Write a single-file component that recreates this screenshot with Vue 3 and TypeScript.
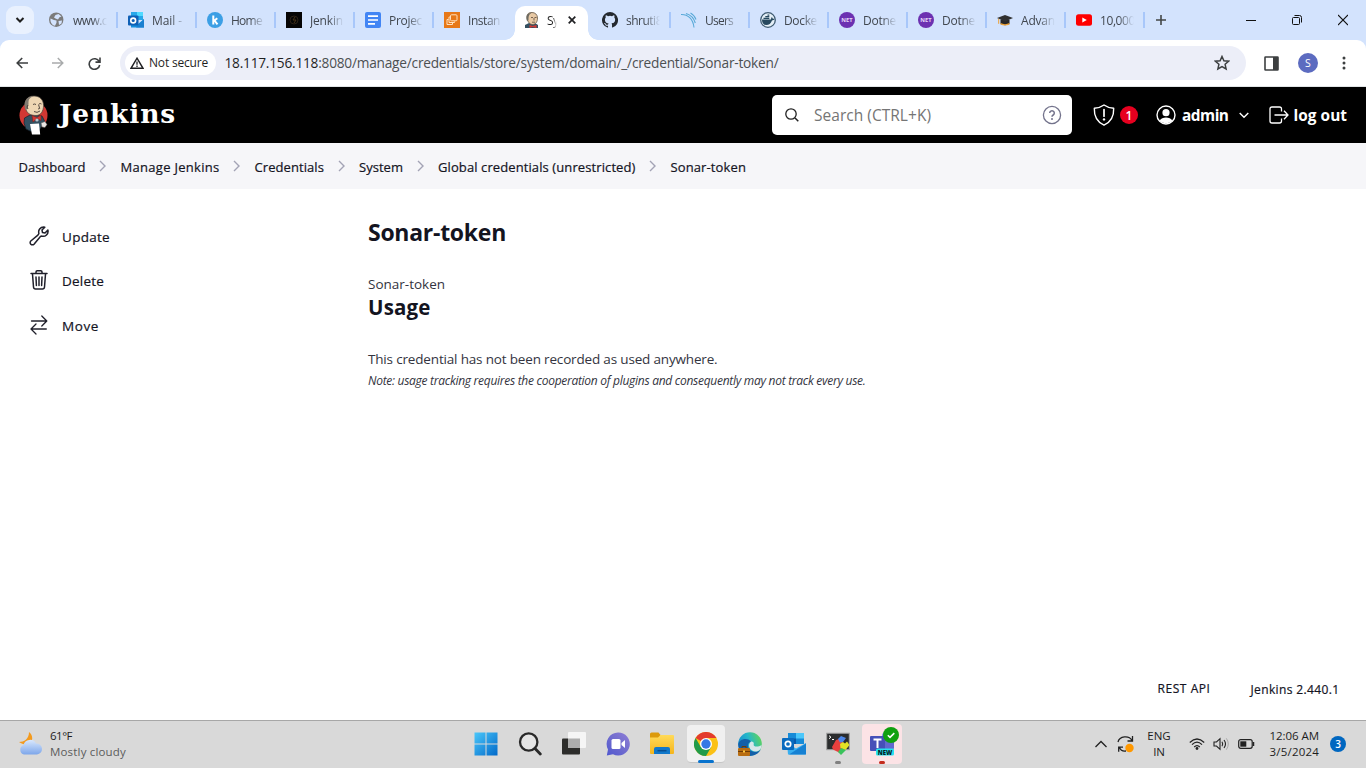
<script setup lang="ts">
interface Tab {
  id: string
  title: string
  icon: string
  width: number
  active?: boolean
  divider?: boolean
}

const tabs: Tab[] = [
  { id: 't0', title: 'www.c', icon: 'globe', width: 34, divider: true },
  { id: 't1', title: 'Mail -', icon: 'mail', width: 30, divider: true },
  { id: 't2', title: 'Home', icon: 'kasm', width: 31, divider: true },
  { id: 't3', title: 'Jenkin', icon: 'black', width: 33, divider: true },
  { id: 't4', title: 'Projec', icon: 'docs', width: 33, divider: true },
  { id: 't5', title: 'Instan', icon: 'aws', width: 32 },
  { id: 't6', title: 'Sy', icon: 'butler', width: 11.5, active: true },
  { id: 't7', title: 'shruti8', icon: 'github', width: 36, divider: true },
  { id: 't8', title: 'Users', icon: 'sonar', width: 28, divider: true },
  { id: 't9', title: 'Docke', icon: 'docker', width: 33, divider: true },
  { id: 't10', title: 'Dotne', icon: 'net', width: 33, divider: true },
  { id: 't11', title: 'Dotne', icon: 'net', width: 33, divider: true },
  { id: 't12', title: 'Advan', icon: 'cap', width: 34, divider: true },
  { id: 't13', title: '10,000', icon: 'youtube', width: 35, divider: true },
]

const crumbs = [
  { label: 'Dashboard', width: 67 },
  { label: 'Manage Jenkins', width: 99 },
  { label: 'Credentials', width: 69.5 },
  { label: 'System', width: 44 },
  { label: 'Global credentials (unrestricted)', width: 197.5 },
  { label: 'Sonar-token', width: 75.5 },
]

const tasks = [
  { label: 'Update', icon: 'wrench', width: 48 },
  { label: 'Delete', icon: 'trash', width: 42 },
  { label: 'Move', icon: 'move', width: 37 },
]

// Spreads or tightens the letters so that a label occupies the given width.
const vFit = {
  mounted(el: HTMLElement, binding: { value: number }) {
    const natural = el.getBoundingClientRect().width
    const count = (el.textContent ?? '').trim().length
    if (count > 0) el.style.letterSpacing = `${(binding.value - natural) / count}px`
  },
}
</script>

<template>
  <div class="screen">
    <div class="tabstrip">
      <div class="tab-menu">
        <svg width="10" height="8" viewBox="0 0 10 8"><path d="M1.5 2 5 5.5 8.5 2" fill="none" stroke="#1f1f1f" stroke-width="2" /></svg>
      </div>
      <div v-for="t in tabs" :key="t.id" class="tab" :class="{ active: t.active, divider: t.divider }">
        <svg class="fav" width="16" height="16" viewBox="0 0 16 16">
          <g v-if="t.icon === 'globe'">
            <circle cx="7.2" cy="7.7" r="7.2" fill="#7b7b7b" />
            <path d="M1.500 6.500 5 8l2.500.5v2.300L6 13.800C3 13 1 10.500 1.500 6.500ZM6.500 3l3-1 3 2.500-2 .8L9 7.500 6.500 6.500 5 5.500ZM9.500 9l3.500-.5-.5 3-2.500 1.500Z" fill="#d3e3fd" />
          </g>
          <g v-else-if="t.icon === 'mail'">
            <path d="M3 0h12v8H3Z" fill="#28a8ea" /><path d="M9 0h6v4H9Z" fill="#50d9ff" /><path d="M3 4h6v5H3Z" fill="#0a6cc0" />
            <path d="M3 15.500V8l7 4 6-5v8.500Z" fill="#1490df" /><path d="m16 7-8 8.500h8Z" fill="#1a7fd0" />
            <rect y="3.500" width="10.500" height="10" rx="1" fill="#0f60b6" /><circle cx="5.200" cy="8.500" r="2.400" fill="none" stroke="#fff" stroke-width="1.600" />
          </g>
          <g v-else-if="t.icon === 'kasm'">
            <circle cx="8" cy="8" r="8" fill="#3c9fe5" /><path d="M6.300 3.500v9M6.800 9l3.500-2.800M7.500 8.500l3 3.800" fill="none" stroke="#fff" stroke-width="2" />
          </g>
          <g v-else-if="t.icon === 'black'">
            <rect width="16" height="16" fill="#050505" /><circle cx="8" cy="8" r="4" fill="none" stroke="#2b2115" /><path d="m9 5-2 3h3l-2 3" fill="none" stroke="#493517" />
          </g>
          <g v-else-if="t.icon === 'docs'">
            <rect width="16" height="16" rx="2" fill="#4285f4" /><path d="M3 4.200h10M3 8h10M3 11.800h7" stroke="#fff" stroke-width="1.700" />
          </g>
          <g v-else-if="t.icon === 'aws'">
            <rect width="16" height="16" fill="#e77818" /><g fill="none" stroke="#ffe0bd"><rect x="6.500" y="2.800" width="6.500" height="6" rx="1" /><path d="M6 5H5v5.500h5.500V9.500" /><path d="M4.500 7.500H3v5h5.500V11" /></g>
          </g>
          <g v-else-if="t.icon === 'butler'">
            <path d="M1 16v-3l4-2h6l3 2v3Z" fill="#335061" /><path d="M3 5C3 1.500 5 .5 8 .5s5.500 2 5.500 5.500c0 4-2 6.500-5 6.500S3 9 3 5Z" fill="#e8c9a4" stroke="#645746" stroke-width=".8" />
            <path d="M3 9C1.500 4 3 1 8 .7 5 2 4.500 4 4.500 8Z" fill="#6d6b62" /><path d="M7 5.500h2m1.500 0h2M10 6v2.500M8 10.200h3" stroke="#59483a" stroke-width=".8" /><path d="m5.500 13 3 1 4-1v3l-4-1-3 1Z" fill="#d33833" />
          </g>
          <g v-else-if="t.icon === 'github'">
            <path fill="#24292f" d="M8 0a8 8 0 0 0-2.530 15.590c.4.070.55-.17.55-.38v-1.490c-2.010.37-2.530-.49-2.690-.94-.09-.23-.48-.94-.82-1.130-.28-.15-.68-.52-.01-.53.63-.01 1.080.58 1.230.82.72 1.210 1.870.87 2.330.66.07-.52.28-.87.51-1.070-1.780-.2-3.640-.89-3.640-3.950 0-.87.31-1.590.82-2.150-.08-.2-.36-1.020.08-2.120 0 0 .67-.21 2.200.82a7.500 7.500 0 0 1 4 0c1.530-1.040 2.200-.82 2.200-.82.44 1.100.16 1.920.08 2.120.51.56.82 1.270.82 2.150 0 3.070-1.870 3.750-3.650 3.950.29.25.54.73.54 1.480v2.200c0 .21.150.46.55.38A8 8 0 0 0 8 0Z" />
          </g>
          <g v-else-if="t.icon === 'sonar'" fill="none" stroke="#58a9d8" stroke-width="1.100">
            <path d="M0 2.500C7 2.200 12 7 13 15.500M5 1.500c5 1.500 8 5 9.300 9.500M9.500 1c3 1.500 4.500 4 5.500 6.500" />
          </g>
          <g v-else-if="t.icon === 'docker'">
            <circle cx="8" cy="8" r="7.300" fill="#e4eff7" stroke="#405c72" stroke-width="1.300" /><path d="M2 7.500h9c0-1 .2-1.800.8-2.500.7.700 1 1.200 1 1.800.7-.1 1.300 0 1.700.3-.5 1-1.300 1.300-2.500 1.300C10.800 11.300 9 13 6.300 13 3.500 13 2 11 2 7.500Z" fill="#27495f" /><path d="M3.500 6.300h5.800M5.300 4.700h4M7.500 3.200h1.800" stroke="#27495f" stroke-width="1.200" />
          </g>
          <g v-else-if="t.icon === 'net'">
            <circle cx="8" cy="8" r="8" fill="#6c31b1" /><text x="8" y="10.300" text-anchor="middle" class="net">NET</text>
          </g>
          <g v-else-if="t.icon === 'cap'">
            <path d="M3.500 8h9v4c-3 1.500-6 1.500-9 0Z" fill="#272727" /><path d="M3.500 11c3 1.500 6 1.500 9 0v1.500c-3 1.300-6 1.300-9 0Z" fill="#eda136" /><path d="m0 6 8-3 8 3-8 3.500Z" fill="#303030" /><path d="M1.700 6.800v5" stroke="#eda136" stroke-width="1" />
          </g>
          <g v-else>
            <rect y="2.300" width="16" height="11.500" rx="2.500" fill="#f00" /><path d="m6.300 5.500 4.500 2.500-4.500 2.500Z" fill="#fff" />
          </g>
        </svg>
        <div class="tab-title"><span v-fit="t.width">{{ t.title }}</span></div>
        <svg v-if="t.active" class="tab-close" width="8" height="8" viewBox="0 0 8 8"><path d="m.7.700 6.600 6.600m0-6.600L.7 7.300" stroke="#202124" stroke-width="1.700" /></svg>
      </div>
      <svg class="plus" width="10" height="10" viewBox="0 0 10 10"><path d="M5 0v10M0 5h10" stroke="#444746" stroke-width="1.600" /></svg>
      <div class="window-buttons">
        <svg width="10" height="12" viewBox="0 0 10 12"><path d="M0 6.500h10" stroke="#111" /></svg>
        <svg width="10" height="12" viewBox="0 0 10 12"><rect x=".5" y="3.500" width="7" height="7" rx="1" fill="none" stroke="#111" /><path d="M2.500 1.500h5q2 0 2 2v5" fill="none" stroke="#111" /></svg>
        <svg width="10" height="12" viewBox="0 0 10 12"><path d="m0 1 10 10m0-10L0 11" stroke="#111" stroke-width="1.100" /></svg>
      </div>
    </div>

    <div class="toolbar-wrap">
      <div class="toolbar">
        <svg class="nav-back" width="12" height="12" viewBox="0 0 12 12"><path d="M12 6H1.500M6.200 1 1.200 6l5 5" fill="none" stroke="#3c3f40" stroke-width="1.600" /></svg>
        <svg class="nav-forward" width="12" height="12" viewBox="0 0 12 12"><path d="M0 6h10.500M5.800 1l5 5-5 5" fill="none" stroke="#a9abac" stroke-width="1.500" /></svg>
        <svg class="nav-reload" width="13" height="13" viewBox="0 0 13 13"><path d="M11.200 4.600A5.300 5.300 0 1 0 11.700 8M12 .5v4.600H7.500" fill="none" stroke="#3c3f40" stroke-width="1.600" /></svg>
        <div class="address">
          <div class="chip">
            <svg width="14" height="12" viewBox="0 0 14 12"><path d="M7 1.200 13 11.300H1Z" fill="none" stroke="#202124" stroke-width="1.400" /><path d="M7 4.500v3.200M7 8.600V10" stroke="#202124" stroke-width="1.300" /></svg>
            <span v-fit="59">Not secure</span>
          </div>
          <span v-fit="554" class="url"><b>18.117.156.118</b>:8080/manage/credentials/store/system/domain/_/credential/Sonar-token/</span>
          <svg class="star" width="16" height="16" viewBox="0 0 16 16"><path d="m8 1.500 1.900 4.300 4.700.4-3.500 3.100 1 4.600L8 11.500l-4.100 2.400 1-4.600-3.500-3.100 4.700-.4Z" fill="none" stroke="#3c3f40" stroke-width="1.500" /></svg>
        </div>
        <svg class="panel" width="15" height="15" viewBox="0 0 15 15"><rect x="1" y="1" width="13" height="13" rx=".5" fill="none" stroke="#3c3f40" stroke-width="1.600" /><path d="M9 1h5v13H9Z" fill="#3c3f40" /></svg>
        <div class="profile">S</div>
        <svg class="dots" width="4" height="14" viewBox="0 0 4 14"><g fill="#3c3f40"><circle cx="2" cy="2" r="1.500" /><circle cx="2" cy="7" r="1.500" /><circle cx="2" cy="12" r="1.500" /></g></svg>
      </div>
    </div>

    <header class="header">
      <svg class="logo" width="30" height="40" viewBox="0 0 30 40">
        <ellipse cx="14.500" cy="20.500" rx="14" ry="14" fill="#d33833" />
        <path d="M5.500 23 11 20l12 1 3 6-3 4-4 6-8-1-4-2-2-6Z" fill="#335061" stroke="#152129" stroke-width=".7" />
        <path d="M6.500 13C5 5 8.500 1 15 1c6 0 9.500 4 9.500 9.500 0 6-3 10-7.500 10C11 20.500 7.500 18 6.500 13Z" fill="#eed6b3" stroke="#49423b" stroke-width=".7" />
        <path d="M6.500 15C4 8 6 1.500 15 .9 9.500 3 9.500 5 9.500 9l-1 5Z" fill="#81796f" />
        <path d="M14 9.500q1.500-1 3 0m3-.5q1.200-1 2.500 0M19.500 9.500l1.200 4-1.700.5M15 16.500q3 2 6-.5M9 10q-2 2 0 4" fill="none" stroke="#453b35" stroke-width=".9" />
        <path d="m13 20.500 5 2 4-2.500v5.500L18 23.500 14 27Z" fill="#d33833" stroke="#80211d" stroke-width=".6" />
        <path d="m11 29 9-.500 1.200 11H13Z" fill="#fff" /><path d="m22 28 4-1.500 2 3-2 3-3-.5Z" fill="#e9e6e4" stroke="#555" stroke-width=".5" /><circle cx="18" cy="25" r="1.600" fill="#b7c5cf" />
      </svg>
      <span v-fit="117" class="brand">Jenkins</span>
      <div class="search">
        <svg width="14" height="14" viewBox="0 0 14 14"><circle cx="6" cy="6" r="5.200" fill="none" stroke="#222" stroke-width="1.300" /><path d="m10 10 3.300 3.300" stroke="#222" stroke-width="1.500" /></svg>
        <span v-fit="117" class="placeholder">Search (CTRL+K)</span>
        <svg class="help" width="20" height="20" viewBox="0 0 20 20"><circle cx="10" cy="10" r="8.600" fill="none" stroke="#73738c" stroke-width="1.300" /><path d="M7.700 8a2.300 2.300 0 1 1 3.500 2c-.8.500-1.200.9-1.200 1.700" fill="none" stroke="#73738c" stroke-width="1.500" /><circle cx="10" cy="14" r="1" fill="#73738c" /></svg>
      </div>
      <svg class="shield" width="22" height="22" viewBox="0 0 22 22"><path d="M11 1C8 3.200 4.500 4 1.300 4.300c-.3 8 2.200 13.500 9.700 16.900 7.500-3.400 10-8.900 9.700-16.900C17.500 4 14 3.200 11 1Z" fill="none" stroke="#fff" stroke-width="1.400" stroke-linejoin="round" /><path d="M11 5.500v6.700" stroke="#fff" stroke-width="1.700" stroke-linecap="round" /><circle cx="11" cy="15.400" r="1.200" fill="#fff" /></svg>
      <div class="alert-count">1</div>
      <svg class="person" width="20" height="20" viewBox="0 0 20 20"><circle cx="10" cy="10" r="9" fill="none" stroke="#fff" stroke-width="1.400" /><circle cx="10" cy="7.700" r="3.600" fill="#fff" /><path d="M3.700 15.500c2-4 10.600-4 12.600 0C13.500 19 6.500 19 3.700 15.500Z" fill="#fff" /></svg>
      <span v-fit="46.500" class="admin">admin</span>
      <svg class="caret" width="10" height="7" viewBox="0 0 10 7"><path d="m.7 1 4.300 4.300L9.300 1" fill="none" stroke="#fff" stroke-width="1.400" /></svg>
      <svg class="exit" width="20" height="18" viewBox="0 0 20 18"><path d="M12.500 5.500V3q0-2-2-2H3Q1 1 1 3v12q0 2 2 2h7.500q2 0 2-2v-2.500M5.500 9H19M15 4.800 19 9l-4 4.200" fill="none" stroke="#fff" stroke-width="1.300" /></svg>
      <span v-fit="53.500" class="logout">log out</span>
    </header>

    <nav class="breadcrumbs">
      <template v-for="(c, i) in crumbs" :key="c.label">
        <div v-if="i > 0" class="chev"><svg width="7" height="12" viewBox="0 0 7 12"><path d="m1 1 5 5-5 5" fill="none" stroke="#a3a3b5" stroke-width="1.400" /></svg></div>
        <span v-fit="c.width">{{ c.label }}</span>
      </template>
    </nav>

    <div class="page">
      <aside class="side">
        <div v-for="t in tasks" :key="t.label" class="task">
          <svg width="20" height="20" viewBox="0 0 20 20" fill="none" stroke="#20202b" stroke-width="1.500" stroke-linejoin="round" stroke-linecap="round">
            <path v-if="t.icon === 'wrench'" d="M14.700.9a5 5 0 0 0-4.800 6.500c-.2 1-.6 1.400-1.300 2L1.800 15a2.200 2.200 0 1 0 3.200 3.200l5.600-6.800c.6-.7 1-1.100 2-1.300a5 5 0 0 0 6.300-6L16 7l-2.500-.5L13 4l2.800-2.800Z" />
            <path v-else-if="t.icon === 'trash'" d="M2 3.500h16M7 3V2q0-1.200 1.200-1.200h3.600Q13 .8 13 2v1M3.500 4l1 13q.2 2 2 2h7q1.800 0 2-2l1-13M7 7l.4 8.500M10 7v8.500M13 7l-.4 8.500" />
            <path v-else d="M2.500 6h14.800M12.800 1l5 5-5 5M17.300 14H2.500M7 9l-5 5 5 5" stroke-width="1.300" />
          </svg>
          <span v-fit="t.width">{{ t.label }}</span>
        </div>
      </aside>
      <main class="main">
        <h1><span v-fit="138">Sonar-token</span></h1>
        <p class="desc"><span v-fit="77">Sonar-token</span></p>
        <h2><span v-fit="62.500">Usage</span></h2>
        <p class="usage"><span v-fit="349.500">This credential has not been recorded as used anywhere.</span></p>
        <p class="note"><span v-fit="497.500">Note: usage tracking requires the cooperation of plugins and consequently may not track every use.</span></p>
      </main>
      <footer class="footer">
        <span v-fit="53" class="rest">REST API</span>
        <span v-fit="89" class="version">Jenkins 2.440.1</span>
      </footer>
    </div>

    <div class="taskbar">
      <svg width="0" height="0" class="defs">
        <defs>
          <linearGradient id="win" gradientUnits="userSpaceOnUse" x1="0" y1="0" x2="24" y2="24"><stop offset="0" stop-color="#4cc9fb" /><stop offset="1" stop-color="#0067c8" /></linearGradient>
          <linearGradient id="cloud" x1="0" y1="0" x2="0" y2="1"><stop offset="0" stop-color="#d9e8fd" /><stop offset="1" stop-color="#7da6ea" /></linearGradient>
          <linearGradient id="chat" x1="0" y1="1" x2="1" y2="0"><stop offset="0" stop-color="#5058cf" /><stop offset=".6" stop-color="#7770cf" /><stop offset="1" stop-color="#8f7ed8" /></linearGradient>
          <linearGradient id="edge" x1="0" y1=".6" x2="1" y2=".2"><stop offset="0" stop-color="#1489cf" /><stop offset=".5" stop-color="#26b7c9" /><stop offset="1" stop-color="#63d653" /></linearGradient>
          <linearGradient id="folder" x1="0" y1="0" x2="0" y2="1"><stop offset="0" stop-color="#ffda59" /><stop offset="1" stop-color="#f5b51c" /></linearGradient>
        </defs>
      </svg>
      <div class="weather">
        <svg width="26" height="26" viewBox="0 0 26 26"><path d="M11 1c4 3 5 10-1 12-3 1-6 0-9-2 5 0 10-3 10-10Z" fill="#f39a1e" /><path d="M6 23.500a5 5 0 0 1-.5-9.500A6.700 6.700 0 0 1 18 12.500a5.500 5.500 0 0 1 1 11Z" fill="url(#cloud)" /></svg>
        <div class="weather-text"><span v-fit="22" class="temp">61°F</span><span v-fit="76">Mostly cloudy</span></div>
      </div>
      <div class="slot"><svg width="24" height="24" viewBox="0 0 24 24"><path d="M.5.500H11.500v11H.5Zm12 0H23.500v11h-11Zm-12 12h11v11H.5Zm12 0h11v11h-11Z" fill="url(#win)" /></svg></div>
      <div class="slot"><svg width="24" height="24" viewBox="0 0 24 24"><circle cx="10.700" cy="10" r="8.700" fill="#e5e5e5" stroke="#292929" stroke-width="2.300" /><path d="m17 16.500 5.300 5.500" stroke="#292929" stroke-width="2.800" stroke-linecap="round" /></svg></div>
      <div class="slot"><svg width="24" height="24" viewBox="0 0 24 24"><rect y="6.500" width="18" height="16" rx="1" fill="#2d2d2b" /><rect x="6" y="0" width="18" height="16" rx="1" fill="#f5f5f5" /><path d="M6 6.500h12V16H6Z" fill="#adadad" /></svg></div>
      <div class="slot"><svg width="24" height="24" viewBox="0 0 24 24"><path d="M12 .5a11.500 11.500 0 1 1-5 21.700L.8 23.500 2 17.500A11.500 11.500 0 0 1 12 .5Z" fill="url(#chat)" /><rect x="5.500" y="7" width="9" height="10" rx="1.500" fill="#fff" /><path d="m15.500 11 3.500-3v8l-3.500-3Z" fill="#fff" /></svg></div>
      <div class="slot"><svg width="24" height="24" viewBox="0 0 24 24"><path d="M0 2q0-1.500 1.500-1.500h7L10.500 3v4H0Z" fill="#dc9a0c" /><path d="M0 5.500h8L10.500 3H23q1 0 1 1v17q0 1-1 1H1q-1 0-1-1Z" fill="url(#folder)" /><path d="M4 22v-5q0-2 2-2h12q2 0 2 2v5Z" fill="#1178ca" /><path d="M7.500 18.700h9" stroke="#084f91" stroke-width="1.500" /></svg></div>
      <div class="slot"><div class="tile chrome-tile">
        <svg width="24" height="24" viewBox="0 0 24 24"><circle cx="12" cy="12" r="12" fill="#fbc116" /><path d="M12 12 1.600 6A12 12 0 0 1 22.400 6H12Z" fill="#e33b2e" /><path d="M1.600 6A12 12 0 0 0 12 24l5.200-9-10.400 0Z" fill="#229b49" /><circle cx="12" cy="12" r="6" fill="#fff" /><circle cx="12" cy="12" r="4.700" fill="#3578e5" /></svg>
        <i class="run blue"></i></div></div>
      <div class="slot"><svg width="24" height="24" viewBox="0 0 24 24"><circle cx="12" cy="12" r="11.800" fill="url(#edge)" /><path d="M.2 12.500C1 7 9 5 13 9.500c-5 1.500-4 10 3.500 10.300 3 0 4.800-1 6.200-2.300C18 27 1 26.500.2 12.500Z" fill="#135fa8" /><path d="M12.500 10c1-1.200 4 .2 3.200 2.200-.8 2.800 4.500 3.200 7.800.8.300 3-1.700 6-5.200 6.500-5.500.6-9.500-5.500-5.800-9.500Z" fill="#d9e6ea" /><rect x="0" y="16" width="12" height="8" rx="1" fill="#b86d12" /><path d="M4 16v-1.500h4V16M0 19.500h12" fill="none" stroke="#6d3b06" /><rect x="5" y="18.500" width="2" height="2" fill="#ffca42" /></svg></div>
      <div class="slot"><svg width="24" height="24" viewBox="0 0 24 24"><path d="M6 1h16v11H6Z" fill="#168bd8" /><path d="M14 1h8v5.500h-8Z" fill="#4bc7fa" /><path d="M6 6.500h8V12H6Z" fill="#0b5aac" /><path d="m5 11 9 5.500L24 11v10.500q0 1-1 1H6Z" fill="#37aef0" /><path d="m7 22.500 17-11v11Z" fill="#1681d3" /><rect y="6" width="12" height="12" rx="1" fill="#0a6bbf" /><circle cx="6" cy="12" r="2.700" fill="none" stroke="#fff" stroke-width="1.700" /></svg></div>
      <div class="slot"><div class="plain-tile"><svg width="24" height="24" viewBox="0 0 24 24"><rect x=".7" y="1.200" width="22.600" height="16.500" fill="#2b2d2e" stroke="#a6a6a6" /><path d="m3 3.700 2 1.500-2 1.500M6 7.500h2" fill="none" stroke="#fff" /><path d="m6 15 4-7 3-1 4 3-2 3 2 3-4 4.500-6-3Z" fill="#e7403e" /><path d="m12 7 3-3 5 2-3 4-3 .5Z" fill="#4d87e8" /><path d="m14 12 3-2 2 1.500 2-2 2.500 3.500-4 5-5-2Z" fill="#e2e325" /><path d="m12 20 3-4 5 2-5 5Z" fill="#3ac35c" /></svg><i class="run gray"></i></div></div>
      <div class="slot"><div class="tile teams-tile"><svg width="30" height="32" viewBox="0 0 30 32"><circle cx="19" cy="8" r="4" fill="#7b83eb" /><path d="M14 11h13v9q-2 7-11 6Z" fill="#6269ce" /><rect x="3" y="8" width="15" height="15" rx="1" fill="#4650b8" /><path d="M6.500 11.500h8M10.500 11.500V20" stroke="#fff" stroke-width="2" /><rect x="9" y="20.500" width="18" height="7" rx="1.500" fill="#27e1ee" /><text x="18" y="26.500" text-anchor="middle" class="new">NEW</text></svg>
        <div class="check"><svg width="16" height="16" viewBox="0 0 16 16"><circle cx="8" cy="8" r="8" fill="#10a010" /><path d="m4.800 8.200 2.200 2.200 4.300-4.300" fill="none" stroke="#fff" stroke-width="1.500" /></svg></div><i class="run red"></i></div></div>
      <div class="tray">
        <svg width="12" height="8" viewBox="0 0 12 8"><path d="M.5 7 6 1.500 11.500 7" fill="none" stroke="#222" stroke-width="1.300" /></svg>
        <svg class="sync" width="17" height="18" viewBox="0 0 17 18"><path d="M1 7c1.500-6 11-7 14 -1.500M15.500 1v5h-5M9 16c-3 .5-5.500-1-6.500-3.500M6 12.200H1.700v4.600" fill="none" stroke="#222" stroke-width="1.300" /><circle cx="12.500" cy="13" r="4.200" fill="#ff9800" /></svg>
        <div class="lang"><span v-fit="23.500">ENG</span><span v-fit="11.500">IN</span></div>
        <svg class="wifi" width="16" height="12" viewBox="0 0 16 12"><path d="M.8 4.500q7.200-7 14.400 0M3 6.700q5-5 10 0M5.200 9q2.800-2.800 5.600 0" fill="none" stroke="#222" stroke-width="1.200" /><circle cx="8" cy="10.500" r="1.400" fill="#222" /></svg>
        <svg class="sound" width="17" height="14" viewBox="0 0 17 14"><path d="M1 5h2.500L7 1.700v10.600L3.500 9H1Z" fill="none" stroke="#222" stroke-width="1.100" /><path d="M9 4.700q1.500 2.300 0 4.600M11 3q3 4 0 8" fill="none" stroke="#222" stroke-width="1.100" /><path d="M13.300 1.300q4 5.700 0 11.400" fill="none" stroke="#aaa" /></svg>
        <svg class="battery" width="17" height="10" viewBox="0 0 17 10"><rect x=".7" y=".7" width="13.500" height="8.600" rx="2" fill="none" stroke="#222" stroke-width="1.200" /><rect x="2.300" y="2.300" width="6" height="5.400" fill="#222" /><path d="M15.500 3v4" stroke="#222" stroke-width="1.500" /></svg>
        <div class="clock"><span v-fit="49.500">12:06 AM</span><span v-fit="49.500">3/5/2024</span></div>
        <div class="notify">3</div>
      </div>
    </div>
  </div>
</template>

<style>
html,
body {
  margin: 0;
  overflow: hidden;
}
</style>

<style scoped>
.screen {
  width: 1366px;
  height: 768px;
  display: flex;
  flex-direction: column;
  background: #fff;
  overflow: hidden;
  font-family: "Open Sans", "Noto Sans", sans-serif;
  color: #14141f;
  white-space: nowrap;
}
.screen * { box-sizing: border-box; }
svg { display: block; flex: none; }
span { flex: none; }

.tabstrip { height: 40px; flex: none; display: flex; background: #d3e3fd; }
.tab-menu { width: 28px; height: 28px; margin: 6px 4px 0 6px; border-radius: 9px; background: #e9f1fe; display: flex; align-items: center; justify-content: center; flex: none; }
.tab { position: relative; width: 79px; flex: none; height: 40px; padding-left: 11px; display: flex; }
.fav { margin-top: 12px; }
.tab-title { width: 34px; height: 27px; margin: 12px 0 0 8px; overflow: hidden; font-size: 12px; line-height: 18px; color: #41474f; -webkit-mask-image: linear-gradient(90deg, #000 55%, transparent); mask-image: linear-gradient(90deg, #000 55%, transparent); }
.divider::after { content: ""; position: absolute; right: -1px; top: 12px; width: 2px; height: 16px; background: #a8c7fa; }
.active { width: 73px; height: 34px; margin: 6px 3px 0; padding-left: 9px; border-radius: 10px 10px 0 0; background: #fff; }
.active::before, .active::after { content: ""; position: absolute; bottom: 0; width: 10px; height: 10px; }
.active::before { left: -10px; background: radial-gradient(circle at 0 0, transparent 9.500px, #fff 10px); }
.active::after { right: -10px; background: radial-gradient(circle at 100% 0, transparent 9.500px, #fff 10px); }
.active .fav { margin-top: 6px; }
.active .tab-title { width: 10px; margin-top: 6px; margin-left: 7px; color: #1f1f1f; }
.tab-close { margin: 10px 0 0 11px; }
.plus { margin: 15px 0 0 12px; }
.net { font: 700 5.800px "Open Sans", sans-serif; fill: #e5d5f8; }
.window-buttons { margin-left: auto; padding: 14px 18px 0 0; display: flex; gap: 36px; }

.toolbar-wrap { height: 47px; flex: none; background: #d3e3fd; }
.toolbar { height: 47px; display: flex; align-items: center; padding-left: 16px; border-bottom: 1px solid #e1e5e6; border-radius: 9px 9px 0 0; background: #fff; }
.nav-forward { margin-left: 24px; }
.nav-reload { margin-left: 24px; }
.address { width: 1126px; height: 34px; margin-left: 19px; padding-left: 5px; border-radius: 17px; background: #eceef8; display: flex; align-items: center; }
.chip { width: 91px; height: 24px; padding-left: 5px; border-radius: 12px; background: #fff; display: flex; align-items: center; gap: 5px; font-size: 12px; line-height: 16px; color: #1f1f1f; font-weight: 500; }
.url { margin-left: 8.500px; font-size: 13.700px; line-height: 20px; color: #4c5052; }
.url b { font-weight: 400; color: #1f1f1f; }
.star { margin-left: auto; margin-right: 16px; }
.panel { margin-left: 18px; }
.profile { width: 20px; height: 20px; margin-left: 19px; border-radius: 50%; background: #5c6bc0; color: #fff; display: flex; align-items: center; justify-content: center; font-size: 10.500px; }
.dots { margin-left: 24px; }

.header { height: 56px; flex: none; display: flex; align-items: center; padding-left: 19px; background: #000; color: #fff; }
.brand { margin-left: 10px; padding-bottom: 3px; font: 700 26.500px/32px "DejaVu Serif", serif; }
.search { width: 300px; height: 40px; margin-left: auto; padding: 0 10px 0 13px; border-radius: 5px; background: #fff; display: flex; align-items: center; }
.placeholder { margin-left: 15px; font-size: 15.500px; line-height: 22px; color: #757575; }
.help { margin-left: auto; }
.shield { margin-left: 21px; }
.alert-count { width: 18px; height: 18px; margin-left: 5px; border-radius: 50%; background: #e6001f; display: flex; align-items: center; justify-content: center; font-size: 12px; font-weight: 600; }
.person { margin-left: 18px; }
.admin, .logout { padding-top: 2px; font-size: 15.400px; line-height: 22px; font-weight: 700; }
.admin { margin-left: 6px; }
.caret { margin-left: 10px; }
.exit { margin-left: 20px; }
.logout { margin-left: 5px; margin-right: 19px; }

.breadcrumbs { height: 46px; flex: none; display: flex; align-items: center; padding: 2px 0 0 18.500px; background: #f6f6f9; font-size: 13px; line-height: 20px; font-weight: 500; -webkit-text-stroke: .2px; }
.chev { width: 35px; display: flex; justify-content: center; padding: 0 1px 2px 0; flex: none; }

.page { height: 531px; flex: none; display: grid; grid-template-columns: 368px 1fr; grid-template-rows: 1fr 46px; }
.side { padding: 26px 0 0 29px; }
.task { height: 44.300px; display: flex; align-items: center; gap: 13px; font-size: 13.500px; line-height: 20px; font-weight: 500; -webkit-text-stroke: .2px; }
.task svg { margin-top: -2px; }
h1, h2, p { margin: 0; }
h1 { margin-top: 27px; font-size: 23px; line-height: 32px; font-weight: 700; }
.desc { margin-top: 25px; font-size: 13.500px; line-height: 22px; color: #333440; }
h2 { margin-top: -2px; font-size: 20.500px; line-height: 28px; font-weight: 700; }
.usage { margin-top: 27px; font-size: 13.500px; line-height: 22px; color: #333440; }
.note { margin-top: 1px; font-size: 12px; line-height: 20px; font-style: italic; color: #333440; }
.footer { grid-column: 1 / 3; display: flex; justify-content: flex-end; gap: 40px; padding: 5px 26.500px 0 0; font-size: 12px; line-height: 20px; font-weight: 500; -webkit-text-stroke: .2px; }
.version { padding-top: 1px; }

.taskbar { height: 48px; flex: none; display: flex; align-items: center; padding-bottom: 1px; background: #d9d9d9; border-top: 1px solid #a7a7a7; font-size: 11.500px; line-height: 16px; color: #1d1d1d; }
.defs { position: absolute; }
.weather { width: 463.500px; flex: none; padding-left: 18px; display: flex; align-items: center; gap: 6px; color: #5b5b5b; }
.weather-text { display: flex; flex-direction: column; align-items: flex-start; }
.temp { color: #1d1d1d; }
.slot { width: 44px; height: 46px; flex: none; display: flex; align-items: center; justify-content: center; }
.tile { position: relative; height: 40px; display: flex; align-items: center; justify-content: center; border-radius: 4px; }
.chrome-tile { width: 38px; height: 38px; background: #f0f0f0; border-bottom: 1px solid #c6c6c6; }
.teams-tile { width: 40px; background: #fce3e6; }
.plain-tile { position: relative; height: 38px; display: flex; align-items: center; }
.run { position: absolute; bottom: -1px; left: 50%; width: 6px; height: 3px; margin-left: -3px; border-radius: 2px; }
.blue { width: 16px; margin-left: -8px; background: #0873ce; }
.gray { background: #808080; }
.red { background: #c42b1c; bottom: 0; }
.check { position: absolute; right: 3px; top: 3px; }
.new { font: 800 6px "Open Sans", sans-serif; fill: #071c25; }
.tray { margin-left: auto; display: flex; align-items: center; padding-right: 20px; }
.sync { margin-left: 10px; }
.lang { width: 30px; margin-left: 10px; display: flex; flex-direction: column; align-items: center; }
.wifi { margin-left: 15px; }
.sound { margin-left: 8px; }
.battery { margin-left: 8px; }
.clock { width: 58px; margin-left: 6px; display: flex; flex-direction: column; align-items: flex-end; }
.notify { width: 16px; height: 16px; margin-left: 11px; border-radius: 50%; background: #0067c0; color: #fff; display: flex; align-items: center; justify-content: center; font-size: 10px; font-weight: 600; }
</style>
